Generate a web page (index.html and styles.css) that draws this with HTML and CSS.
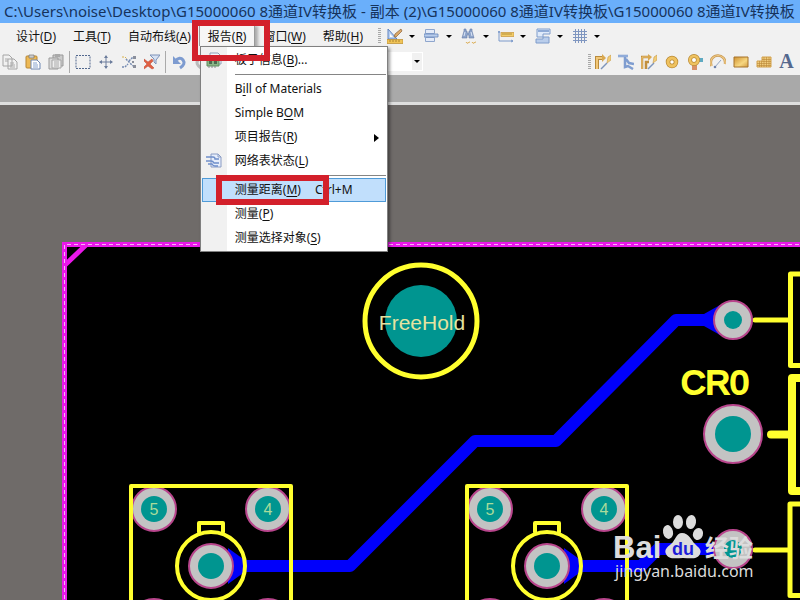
FILE: index.html
```
<!DOCTYPE html>
<html lang="zh-CN">
<head>
    <meta charset="UTF-8">
    <meta name="viewport" content="width=device-width, initial-scale=1.0">
    <title>G15000060 8通道IV转换板</title>
    <link rel="stylesheet" href="styles.css">
</head>
<body>
    <header class="titlebar">C:\Users\noise\Desktop\G15000060 8通道IV转换板 - 副本 (2)\G15000060 8通道IV转换板\G15000060 8通道IV转换板</header>

    <nav class="menubar">
        <button class="menu-title">设计(<u>D</u>)</button>
        <button class="menu-title">工具(<u>T</u>)</button>
        <button class="menu-title">自动布线(<u>A</u>)</button>
        <div class="menu-open">
            <button class="menu-title active">报告(<u>R</u>)</button>
            <ul class="dropdown">
                <li><button class="menu-item">
                    <svg class="menu-icon" viewBox="0 0 16 16"><path d="M4 1h8l3 3v8H4z" fill="#f4f6fa" stroke="#8fa0b8"/><path d="M1 7h12v7H1z" fill="#8bb586" stroke="#5c8d5f"/><path d="M3 9h3v3H3zM8 9h3v3H8z" fill="#4c6a50"/><path d="M3 14v2M6 14v2M9 14v2" stroke="#888"/></svg>
                    板子信息(<u>B</u>)...</button></li>
                <li class="line"></li>
                <li><button class="menu-item">B<u>i</u>ll of Materials</button></li>
                <li><button class="menu-item">Simple B<u>O</u>M</button></li>
                <li><button class="menu-item">项目报告(<u>R</u>)<span class="submenu-arrow"></span></button></li>
                <li><button class="menu-item">
                    <svg class="menu-icon" viewBox="0 0 16 16"><path d="M5 1h7l3 3v10H5z" fill="#e7eefb" stroke="#8a9cc4"/><path d="M12 1v3h3" fill="none" stroke="#8a9cc4"/><path d="M0 4h7q2 0 2 2h4M0 8h5q2 0 3 2h5M2 11h4q1 2 3 2h3" fill="none" stroke="#6f8fca" stroke-width="1.4"/></svg>
                    网络表状态(<u>L</u>)</button></li>
                <li class="line"></li>
                <li class="marked"><button class="menu-item selected">测量距离(<u>M</u>)<span class="shortcut">Ctrl+M</span></button><span class="mark mark-item"></span></li>
                <li><button class="menu-item">测量(<u>P</u>)</button></li>
                <li><button class="menu-item">测量选择对象(<u>S</u>)</button></li>
            </ul>
            <span class="mark mark-title"></span>
        </div>
        <button class="menu-title">窗口(<u>W</u>)</button>
        <button class="menu-title">帮助(<u>H</u>)</button>

        <div class="drop-tools">
            <span class="grip"></span>
            <button class="drop-tool" aria-label="绘图">
                <svg viewBox="0 0 16 16"><path d="M1 1v10h9z" fill="#b9d0f2" stroke="#5e82bf"/><path d="M3 6v3h3z" fill="#fff"/><path d="M7 9l1-3 6-5 1 2-6 6z" fill="#dca96a" stroke="#8a6238" stroke-width=".7"/><path d="M0 11.5h16v4H0z" fill="#f0c458" stroke="#b98b2c" stroke-width=".7"/><path d="M3 12v2M6 12v2M9 12v2M12 12v2" stroke="#8f6b1c" stroke-width=".7"/></svg><i class="caret"></i></button>
            <button class="drop-tool" aria-label="对齐">
                <svg viewBox="0 0 16 16"><path d="M1.500 1.500h9v4h-9zM1.500 9.500h9v4h-9z" fill="#e4ebf8" stroke="#8fa6cd"/><path d="M0 6h14v3H0z" fill="#b9cdec" stroke="#6686bb" stroke-width=".8"/></svg><i class="caret"></i></button>
            <button class="drop-tool" aria-label="查找">
                <svg viewBox="0 0 16 16"><path d="M3 1h2v2h1v2h2V3h1V1h2v2l2 7H8V7H6v3H1l2-7z" fill="#8fa5cb" stroke="#667ca8" stroke-width=".6"/><path d="M4 4l-1 4M10 4l1 4" stroke="#dce7f7"/><path d="M5 14q1 2 2 1t2-1M11 14q1 2 2 1t2-1" fill="none" stroke="#dcae55"/></svg><i class="caret"></i></button>
            <button class="drop-tool" aria-label="尺寸">
                <svg viewBox="0 0 16 16"><path d="M1 3v10h14M1 3l-1 2M1 3l1 2M15 13l-2-1M15 13l-2 1" fill="none" stroke="#7c9acb"/><path d="M3 4.500h13v4H3z" fill="#f2cd69" stroke="#c69439" stroke-width=".7"/><path d="M5 5v2M7 5v2M9 5v2M11 5v2M13 5v2" stroke="#9c7627" stroke-width=".7"/></svg><i class="caret"></i></button>
            <button class="drop-tool" aria-label="Room">
                <svg viewBox="0 0 16 16"><path d="M2 1h13v5H8v3H2z" fill="#dfeafa" stroke="#7f9ccb"/><path d="M3 2h11v2H3z" fill="#8eaad6"/><path d="M8 9h6v6H1v-4h7z" fill="#b9cdeb" stroke="#7f9ccb"/></svg><i class="caret"></i></button>
            <button class="drop-tool" aria-label="网格">
                <svg viewBox="0 0 16 16"><path d="M3.500 1v14M6.500 1v14M9.500 1v14M12.500 1v14M1 3.500h14M1 6.500h14M1 9.500h14M1 12.500h14" stroke="#7f96c0" stroke-width="1" fill="none"/></svg><i class="caret"></i></button>
        </div>
    </nav>

    <div class="toolbar">
        <button class="tool" aria-label="复制"><svg viewBox="0 0 16 16"><path d="M1 1h6l3 3v8H1zM6 5h6l3 3v7H6z" fill="#f1f1f1" stroke="#a5a5a5"/><path d="M3 5h3M3 7h3M8 9h4M8 11h5M8 13h5" stroke="#a9a9a9"/></svg></button>
        <button class="tool" aria-label="粘贴"><svg viewBox="0 0 16 16"><rect x="1" y="2" width="11" height="12" rx="1" fill="#edb955" stroke="#b88735"/><path d="M4 1h5v3H4z" fill="#ccc" stroke="#777" stroke-width=".7"/><path d="M6 6h6l3 3v6H6z" fill="#fff" stroke="#6e87b3"/><path d="M8 9h4M8 11h5M8 13h5" stroke="#88a3cf"/></svg></button>
        <button class="tool" aria-label="橡皮图章"><svg viewBox="0 0 16 16"><path d="M5 1h10v11H5z" fill="#ccc" stroke="#999"/><path d="M7 0h5v3H7z" fill="#aaa"/><path d="M1 4h9v11H1z" fill="#ddd" stroke="#999"/><path d="M4 6h9v8H4z" fill="#eee" stroke="#a5a5a5"/><path d="M6 8h5M6 10h5M6 12h5" stroke="#aaa"/></svg></button>
        <span class="divider"></span>
        <button class="tool" aria-label="选择区域"><svg viewBox="0 0 16 16"><path d="M1 1.500h14v13H1z" fill="none" stroke="#53698f" stroke-dasharray="2 1"/></svg></button>
        <button class="tool" aria-label="移动"><svg viewBox="0 0 16 16"><path d="M8 2v12M2 8h12" stroke="#6c7d9c"/><path d="M8 1l2 3H6zM8 15l2-3H6zM1 8l3-2v4zM15 8l-3-2v4z" fill="#6c7d9c"/></svg></button>
        <button class="tool" aria-label="取消选择"><svg viewBox="0 0 16 16"><path d="M5 5l7 7M1 13h3l3-3M8 7l4-4" fill="none" stroke="#758bb2" stroke-width="1.500" stroke-dasharray="2 1"/><path d="M12 2h3v3h-3zM12 11h3v3h-3zM11 7h2v2h-2z" fill="#8a8f9c"/><path d="M1 3h3l2 2" fill="none" stroke="#d8b24f" stroke-dasharray="2 1"/></svg></button>
        <button class="tool" aria-label="清除过滤器"><svg viewBox="0 0 16 16"><path d="M6 1h10l-4 5v4l-2-2V5z" fill="#d6e1f3" stroke="#7c91b7"/><path d="M0 5l4 3 4-3 1 2-3 3 4 4-2 1-4-3-4 3-1-1 4-4-3-3z" fill="#e06043" stroke="#bd4630" stroke-width=".5"/></svg></button>
        <span class="divider"></span>
        <button class="tool" aria-label="撤销"><svg viewBox="0 0 16 16"><path d="M4 7q5-5 8-1t-3 8" fill="none" stroke="#7d9bd0" stroke-width="3"/><path d="M2 2v8h8z" fill="#7d9bd0"/></svg></button>
        <button class="tool" aria-label="重做"><svg viewBox="0 0 16 16"><path d="M12 7q-5-5-8-1t3 8" fill="none" stroke="#bbb" stroke-width="3"/><path d="M14 2v8H6z" fill="#bbb"/></svg></button>
        <div class="combo"><select aria-label="过滤器"><option></option></select></div>

        <div class="place-tools">
            <span class="grip"></span>
            <button class="tool" aria-label="交互式布线"><svg viewBox="0 0 16 16"><path d="M2 15V4h6" fill="none" stroke="#b98b3c" stroke-width="4"/><path d="M2 15V4h6" fill="none" stroke="#f1c778" stroke-width="2"/><path d="M7 0l4 4-4 4z" fill="#d9a850"/><path d="M6 15l6-6" stroke="#7d94ba" stroke-width="1.500"/><path d="M12 9l1-6 3-2v5z" fill="#f2ce79" stroke="#c69a4c" stroke-width=".6"/></svg></button>
            <button class="tool" aria-label="差分对布线"><svg viewBox="0 0 16 16"><path d="M0 2h10M7 2v11l3-1 5 3M8 5l3 4 5 1" fill="none" stroke="#7f9dd0" stroke-width="2.500"/><path d="M0 2h10" stroke="#a3bbe2"/></svg></button>
            <button class="tool" aria-label="多重布线"><svg viewBox="0 0 16 16"><path d="M1 15V3h7M5 15V8h3" fill="none" stroke="#c18f3e" stroke-width="2.500"/><path d="M1 15V3h7" fill="none" stroke="#f1c778"/><path d="M7 0l4 3-4 4z" fill="#d9a850"/><path d="M7 15l6-6" stroke="#7d94ba" stroke-width="1.500"/><path d="M12 9l1-6 3-2v5z" fill="#f2ce79" stroke="#c69a4c" stroke-width=".6"/></svg></button>
            <button class="tool" aria-label="焊盘"><svg viewBox="0 0 16 16"><circle cx="8" cy="8" r="4" fill="#fff" stroke="#b98a36" stroke-width="4.500"/><circle cx="8" cy="8" r="4" fill="none" stroke="#efc25f" stroke-width="3"/></svg></button>
            <button class="tool" aria-label="过孔"><svg viewBox="0 0 16 16"><path d="M5 9h5v7H5z" fill="#d99068"/><path d="M9 4h7v4H9z" fill="#5faac2"/><circle cx="7" cy="6" r="4" fill="#fff" stroke="#b98a36" stroke-width="4"/><circle cx="7" cy="6" r="4" fill="none" stroke="#efc25f" stroke-width="2.600"/></svg></button>
            <button class="tool" aria-label="圆弧"><svg viewBox="0 0 16 16"><path d="M1.500 12C-1 5 4 1.500 8 1.500S16 5 15 10" fill="none" stroke="#c99a55" stroke-width="2.600"/><path d="M1.500 12C-1 5 4 1.500 8 1.500S16 5 15 10" fill="none" stroke="#f0cb87" stroke-width="1.200"/><path d="M5 13l6-7" stroke="#92a5c2"/><circle cx="5" cy="13" r="1.300" fill="#6e83ab"/></svg></button>
            <button class="tool" aria-label="填充"><svg viewBox="0 0 16 16"><defs><linearGradient id="fill" x2="1" y2="1"><stop stop-color="#cf9130"/><stop offset=".6" stop-color="#f7d781"/><stop offset="1" stop-color="#d29c42"/></linearGradient></defs><path d="M1 3h14v10H1z" fill="url(#fill)" stroke="#a6722b"/></svg></button>
            <button class="tool" aria-label="多边形敷铜"><svg viewBox="0 0 16 16"><path d="M1 7h5V3h9v10H1z" fill="#f0cc7d" stroke="#d2a04a"/><path d="M1 9.500h14M1 11.500h14M6 5.500h9M6 7.500h9M3.500 7v6M5.500 7v6M8 3v10M10.500 3v10M13 3v10" stroke="#b98735" stroke-width=".6"/></svg></button>
            <button class="tool letter" aria-label="字符串">A</button>
        </div>
    </div>

    <div class="tabstrip"></div>

    <main class="workspace">
        <svg class="board" viewBox="0 105 800 495" preserveAspectRatio="xMinYMin slice">
            <defs>
                <!-- one BNC style connector, origin at its centre pin -->
                <g id="connector">
                    <g class="pad">
                        <circle cx="-57" cy="-57" r="22"/>
                        <circle cx="57" cy="-57" r="22"/>
                        <circle cx="-57" cy="57" r="24"/>
                        <circle cx="57" cy="57" r="24"/>
                        <circle r="22"/>
                    </g>
                    <g class="hole">
                        <circle cx="-57" cy="-57" r="13"/>
                        <circle cx="57" cy="-57" r="13"/>
                        <circle r="13"/>
                    </g>
                    <path class="silk" d="M-80 50V-80H80V50M-12-34V-43H12V-34"/>
                    <circle class="silk" r="34"/>
                    <text class="pin" x="-57" y="-51">5</text>
                    <text class="pin" x="57" y="-51">4</text>
                </g>
            </defs>

            <rect x="62" y="242" width="760" height="380" fill="#000"/>
            <path class="outline" d="M820 244.500H64.500V620M65 265L87 244"/>
            <path class="outline-dash" d="M820 244.500H64.500V620"/>

            <path class="trace" d="M211 566H350L475 441H556L676 320H733M547 566H641L658 549H733"/>
            <path class="tear" d="M228 548L246 561V571L228 584zM564 548L582 561V571L564 584zM720 305L704 314V326L720 335z"/>

            <use href="#connector" x="211" y="566"/>
            <use href="#connector" x="547" y="566"/>

            <circle class="hole" cx="421" cy="321" r="36"/>
            <circle class="silk ring" cx="421" cy="321" r="56"/>
            <text class="freehold" x="422" y="330">FreeHold</text>

            <path class="silk ring" d="M755 320H790M810 274H790.500V365.500H810M755 550H790M810 504H790V595.500H810"/>
            <path class="silk thick" d="M771 434.500H792M810 378H792V491H810"/>
            <g class="pad">
                <circle cx="733" cy="320" r="19"/>
                <circle cx="733" cy="434" r="29"/>
                <circle cx="733" cy="549" r="19"/>
            </g>
            <g class="hole">
                <circle cx="733" cy="320" r="9"/>
                <circle cx="733" cy="434" r="18"/>
                <circle cx="733" cy="549" r="9"/>
            </g>
            <text class="designator" x="681" y="394">CR0</text>

            <g class="watermark">
                <text class="brand" x="613" y="558">Bai</text>
                <ellipse cx="668" cy="532" rx="5" ry="7" transform="rotate(-12 668 532)"/>
                <ellipse cx="678" cy="522" rx="5" ry="7"/>
                <ellipse cx="691" cy="522" rx="5" ry="7" transform="rotate(8 691 522)"/>
                <ellipse cx="698" cy="534" rx="5" ry="6" transform="rotate(20 698 534)"/>
                <path d="M682 533c7 0 9 7 13 11s7 6 5 10c-3 6-10 4-17 4s-14 2-17-4c-2-4 1-7 5-10s5-11 11-11z"/>
                <text class="du" x="683" y="555">du</text>
                <text class="brand-cn" x="705" y="557">经验</text>
                <text class="url" x="615" y="577">jingyan.baidu.com</text>
            </g>
        </svg>
    </main>
</body>
</html>
```

FILE: styles.css
```
* {
    box-sizing: border-box;
}
body {
    margin: 0;
    height: 100vh;
    display: flex;
    flex-direction: column;
    overflow: hidden;
    background: #6f6b69;
    color: #111;
    font-family: "Noto Sans", "Noto Sans CJK SC", sans-serif;
    font-size: 12px;
}
button {
    border: none;
    padding: 0;
    background: none;
    color: inherit;
    font: inherit;
}
u {
    text-underline-offset: 2px;
}
.titlebar {
    height: 23px;
    padding-left: 4px;
    background: #6aaffb;
    color: #16335c;
    font-size: 15px;
    line-height: 23px;
    white-space: nowrap;
    overflow: hidden;
}

/* menu bar */
.menubar {
    display: flex;
    gap: 1px;
    height: 25px;
    padding: 2px 0 0 8px;
    background: #f1f1f1;
    white-space: nowrap;
}
.menu-title {
    height: 22px;
    padding: 0 8px;
}
.menu-open {
    position: relative;
    z-index: 2;
}
.menu-title.active {
    background: #f6f6f6;
    box-shadow: -1px -1px 0 #9a9a9a, 1px 0 0 #9a9a9a, 4px 1px 3px #aaa;
}
.dropdown {
    position: absolute;
    top: 21px;
    left: 0;
    width: 188px;
    margin: 0;
    padding: 1px;
    list-style: none;
    border: 1px solid #808080;
    background: linear-gradient(to right, #f1f1f1 26px, #fff 26px);
    box-shadow: 2px 2px 3px rgba(0, 0, 0, 0.4);
}
.menu-item {
    position: relative;
    display: block;
    width: 100%;
    height: 24px;
    padding-left: 32px;
    border: 1px solid transparent;
    line-height: 20px;
    text-align: left;
    white-space: nowrap;
}
.menu-item.selected {
    border-color: #4f9bd8;
    background: #c1dffc;
}
.menu-icon {
    position: absolute;
    left: 3px;
    top: 3px;
    width: 16px;
    height: 16px;
}
.shortcut {
    margin-left: 14px;
}
.submenu-arrow {
    float: right;
    margin: 7px 6px 0 0;
    border: 4px solid transparent;
    border-left: 5px solid #000;
    border-right: none;
}
.line {
    height: 5px;
    margin-left: 33px;
    padding: 2px 0;
    background: #858585 content-box;
}
.marked {
    position: relative;
}
.mark {
    position: absolute;
    border: 6px solid #d3202b;
    pointer-events: none;
}
.mark-title {
    inset: -5px -16px -13px -8px;
}
.mark-item {
    inset: -3px 57px -3px 14px;
}

/* toolbars */
.grip {
    width: 3px;
    height: 16px;
    background: repeating-linear-gradient(#a8a8a8 0 1px, #f1f1f1 1px 2px);
}
.drop-tools {
    display: flex;
    align-items: center;
    height: 22px;
    margin-left: 6px;
}
.drop-tool {
    display: flex;
    align-items: center;
    width: 37px;
    padding-left: 6px;
}
.drop-tool svg, .tool svg {
    width: 16px;
    height: 16px;
}
.caret {
    margin-left: 6px;
    border: 3px solid transparent;
    border-top-color: #000;
    border-bottom: none;
}
.toolbar {
    display: flex;
    align-items: center;
    height: 27px;
    background: #f1f1f1;
}
.tool {
    display: flex;
    align-items: center;
    justify-content: center;
    width: 23px;
    height: 22px;
}
.tool:first-child {
    margin-left: -2px;
}
.divider {
    width: 1px;
    height: 22px;
    margin: 0 1px 0 2px;
    background: #aaa;
}
.combo {
    position: relative;
    width: 210px;
    height: 19px;
}
.combo select {
    width: 100%;
    height: 100%;
    appearance: none;
    border: 1px solid #fff;
    border-radius: 0;
    background: linear-gradient(to left, #f1f1f1 10px, #fff 10px);
}
.combo::after {
    content: "";
    position: absolute;
    right: 3px;
    top: 8px;
    border: 3px solid transparent;
    border-top-color: #000;
    border-bottom: none;
}
.place-tools {
    display: flex;
    align-items: center;
    margin-left: auto;
    padding-right: 2px;
}
.letter {
    color: #54688e;
    font: bold 20px "Liberation Serif", serif;
}
.tabstrip {
    height: 30px;
    border-bottom: 3px solid #dedede;
    background: #a9a9a9;
}

/* board */
.workspace {
    flex: 1;
    min-height: 0;
}
.board {
    display: block;
    width: 100%;
    height: 100%;
}
.outline {
    fill: none;
    stroke: #ea18ea;
    stroke-width: 5;
}
.outline-dash {
    fill: none;
    stroke: #f8b4f8;
    stroke-width: 1;
    stroke-dasharray: 4 3;
}
.trace {
    fill: none;
    stroke: #0000fb;
    stroke-width: 12;
    stroke-linejoin: round;
}
.tear {
    fill: #0000fb;
}
.pad {
    fill: #c3c3c3;
    stroke: #b8458c;
    stroke-width: 2;
}
.hole {
    fill: #009590;
}
.silk {
    fill: none;
    stroke: #ffff2e;
    stroke-width: 4;
    stroke-linejoin: round;
    stroke-linecap: round;
}
.silk.ring {
    stroke-width: 5;
}
.silk.thick {
    stroke-width: 8;
}
.pin {
    fill: #a9dc9b;
    font: 16px "Liberation Sans", sans-serif;
    text-anchor: middle;
}
.freehold {
    fill: #e5e3a0;
    font: 21px "Liberation Sans", sans-serif;
    text-anchor: middle;
}
.designator {
    fill: #ffff2e;
    stroke: #ffff2e;
    stroke-width: 2;
    font: 34px "Liberation Sans", sans-serif;
}
.watermark {
    fill: #dcdcdc;
}
.brand {
    font: bold 31px "Liberation Sans", sans-serif;
}
.brand-cn {
    font: bold 24px "Noto Sans CJK SC", sans-serif;
}
.du {
    fill: #1c1cd8;
    font: bold 18px "Liberation Sans", sans-serif;
    text-anchor: middle;
}
.url {
    font: 16px "Noto Sans", sans-serif;
}
```
